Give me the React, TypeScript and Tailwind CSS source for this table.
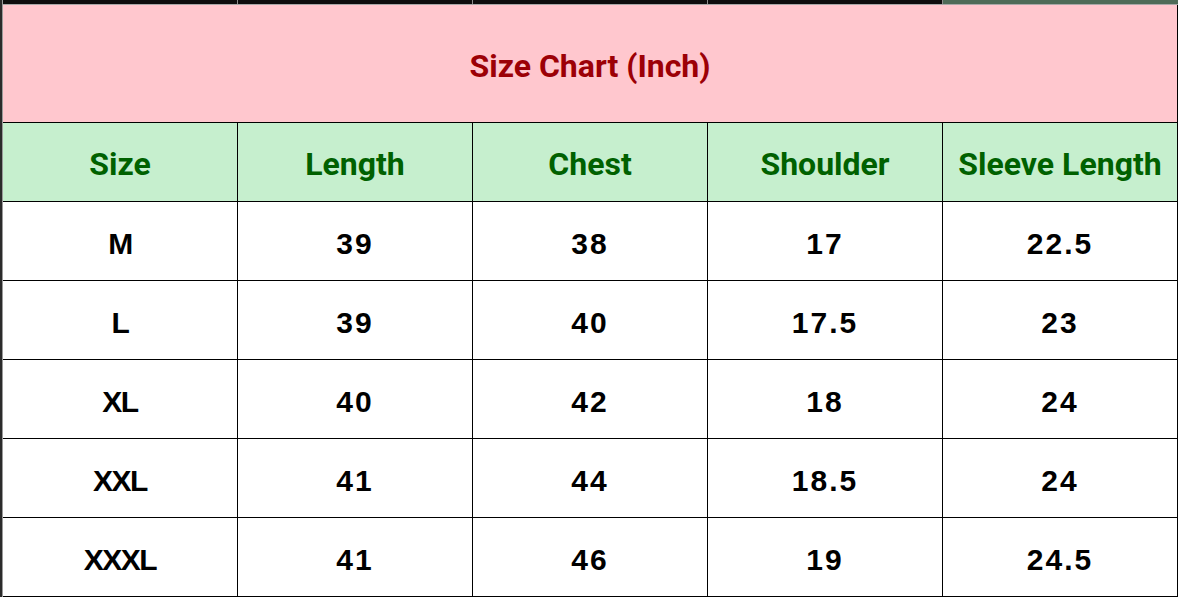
const headers = ["Size", "Length", "Chest", "Shoulder", "Sleeve Length"];

const rows = [
  ["M", "39", "38", "17", "22.5"],
  ["L", "39", "40", "17.5", "23"],
  ["XL", "40", "42", "18", "24"],
  ["XXL", "41", "44", "18.5", "24"],
  ["XXXL", "41", "46", "19", "24.5"],
];

export default function App() {
  return (
    <div className="w-[1180px] h-[597px] bg-white flex overflow-hidden">
      {/* sheet edge */}
      <div className="w-[3px] h-full bg-[#2b2b2b] border-r border-[#9a9a9a]" />

      <div className="w-[1175px] flex flex-col">
        {/* column header strip cut off at the top */}
        <div className="grid grid-cols-5 h-[5px] border-b border-[#a8a8a8]">
          <div className="bg-[#0d0d0d] border-r border-[#8c8c8c]" />
          <div className="bg-[#0d0d0d] border-r border-[#8c8c8c]" />
          <div className="bg-[#0d0d0d] border-r border-[#8c8c8c]" />
          <div className="bg-[#0d0d0d] border-r border-[#8c8c8c]" />
          <div className="bg-[#4e6b58]" />
        </div>

        <div className="h-[118px] pt-1 bg-[#ffc7ce] border-r border-b border-black flex items-center justify-center">
          <span className="font-['Roboto',sans-serif] font-bold text-[32px] text-[#9c0006]">
            Size Chart (Inch)
          </span>
        </div>

        <div className="grid grid-cols-5 bg-[#c6efce]">
          {headers.map((h) => (
            <div
              key={h}
              className="h-[79px] pt-1 border-r border-b border-black flex items-center justify-center font-['Roboto',sans-serif] font-bold text-[32px] text-[#006100]"
            >
              {h}
            </div>
          ))}
        </div>

        {rows.map((r) => (
          <div key={r[0]} className="grid grid-cols-5">
            {r.map((v, i) => (
              <div
                key={i}
                className={
                  i === 0
                    ? "h-[79px] pt-1 border-r border-b border-black flex items-center justify-center font-['Liberation_Sans',Arial,sans-serif] font-bold text-[30px] tracking-[-1.5px] text-black"
                    : "h-[79px] pt-1 border-r border-b border-black flex items-center justify-center font-['Liberation_Sans',Arial,sans-serif] font-bold text-[30px] tracking-[2px] text-black"
                }
              >
                {v}
              </div>
            ))}
          </div>
        ))}
      </div>

      <div className="flex-1" />
    </div>
  );
}
